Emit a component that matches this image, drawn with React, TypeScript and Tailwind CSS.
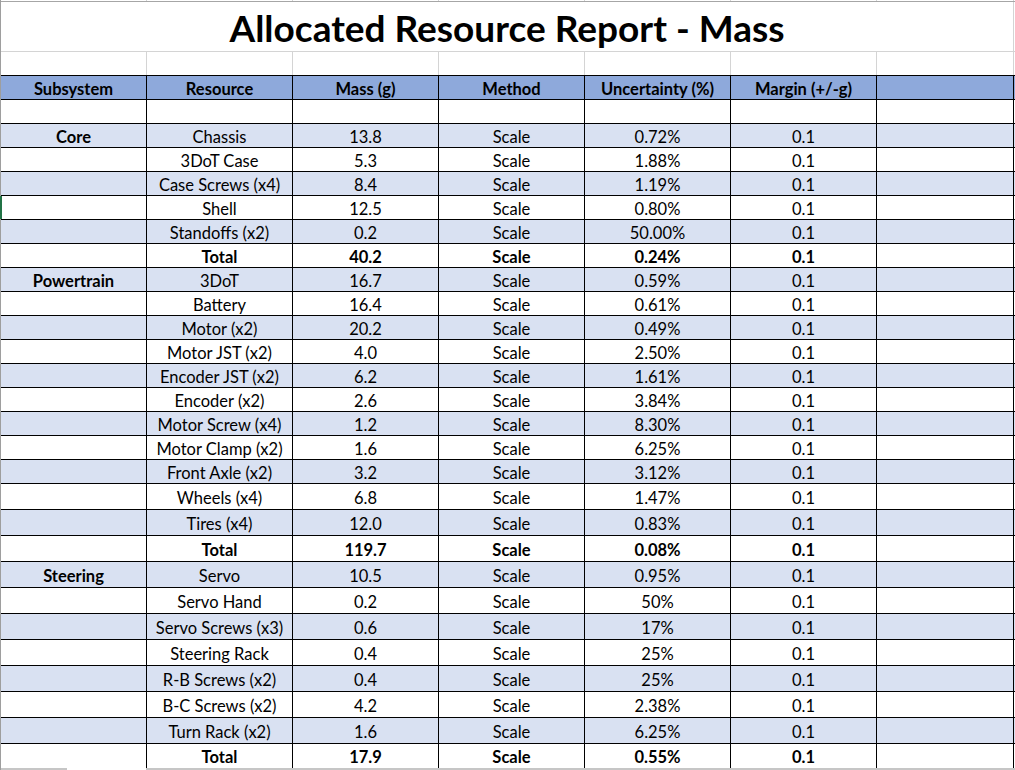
import React from "react";

type Row = {
  sub?: string;
  res: string;
  mass: string;
  unc: string;
  bold?: boolean;
  h: number;
};

const rows: Row[] = [
  { sub: "Core", res: "Chassis", mass: "13.8", unc: "0.72%", h: 24 },
  { res: "3DoT Case", mass: "5.3", unc: "1.88%", h: 24 },
  { res: "Case Screws (x4)", mass: "8.4", unc: "1.19%", h: 24 },
  { res: "Shell", mass: "12.5", unc: "0.80%", h: 24 },
  { res: "Standoffs (x2)", mass: "0.2", unc: "50.00%", h: 24 },
  { res: "Total", mass: "40.2", unc: "0.24%", bold: true, h: 24 },
  { sub: "Powertrain", res: "3DoT", mass: "16.7", unc: "0.59%", h: 24 },
  { res: "Battery", mass: "16.4", unc: "0.61%", h: 24 },
  { res: "Motor (x2)", mass: "20.2", unc: "0.49%", h: 24 },
  { res: "Motor JST (x2)", mass: "4.0", unc: "2.50%", h: 24 },
  { res: "Encoder JST (x2)", mass: "6.2", unc: "1.61%", h: 24 },
  { res: "Encoder (x2)", mass: "2.6", unc: "3.84%", h: 24 },
  { res: "Motor Screw (x4)", mass: "1.2", unc: "8.30%", h: 24 },
  { res: "Motor Clamp (x2)", mass: "1.6", unc: "6.25%", h: 24 },
  { res: "Front Axle (x2)", mass: "3.2", unc: "3.12%", h: 24 },
  { res: "Wheels (x4)", mass: "6.8", unc: "1.47%", h: 26 },
  { res: "Tires (x4)", mass: "12.0", unc: "0.83%", h: 26 },
  { res: "Total", mass: "119.7", unc: "0.08%", bold: true, h: 26 },
  { sub: "Steering", res: "Servo", mass: "10.5", unc: "0.95%", h: 26 },
  { res: "Servo Hand", mass: "0.2", unc: "50%", h: 26 },
  { res: "Servo Screws (x3)", mass: "0.6", unc: "17%", h: 26 },
  { res: "Steering Rack", mass: "0.4", unc: "25%", h: 26 },
  { res: "R-B Screws (x2)", mass: "0.4", unc: "25%", h: 26 },
  { res: "B-C Screws (x2)", mass: "4.2", unc: "2.38%", h: 26 },
  { res: "Turn Rack (x2)", mass: "1.6", unc: "6.25%", h: 26 },
  { res: "Total", mass: "17.9", unc: "0.55%", bold: true, h: 24 },
];

const colW = ["w-[146px]", "w-[146px]", "w-[146px]", "w-[146px]", "w-[146px]", "w-[146px]", "w-[137px]"];

function Cell({ i, children, bold, gray }: { i: number; children?: React.ReactNode; bold?: boolean; gray?: boolean }) {
  return (
    <div
      className={`${colW[i]} shrink-0 h-full flex items-center justify-center pt-[3px] border-r ${gray ? "border-[#d4d4d4]" : "border-black"} ${bold ? "font-bold" : ""} whitespace-nowrap`}
    >
      {children}
    </div>
  );
}

export default function App() {
  return (
    <div
      className="w-[1015px] h-[770px] overflow-hidden bg-white text-black text-[16.5px] leading-none"
      style={{ fontFamily: "Lato, 'Open Sans', sans-serif" }}
    >
      <div className="border-l border-[#9e9e9e] h-full">
        {/* top partial row */}
        <div className="flex h-[1px]">
          {colW.map((_, i) => (
            <div key={i} className={`${colW[i]} shrink-0 h-full border-r border-[#d4d4d4]`} />
          ))}
        </div>
        {/* title */}
        <div className="flex h-[51px] border-t border-b border-t-[#a6a6a6] border-b-[#d4d4d4]">
          <div className="w-[1013px] shrink-0 border-r border-[#d4d4d4] flex items-center justify-center text-[37px] font-bold pt-[1px]">
            Allocated Resource Report - Mass
          </div>
        </div>
        {/* empty row */}
        <div className="flex h-[23px]">
          {colW.map((_, i) => (
            <Cell key={i} i={i} gray />
          ))}
        </div>
        {/* header */}
        <div className="flex h-[25px] border-t border-b border-black bg-[#8ea9db] font-bold">
          <Cell i={0}>Subsystem</Cell>
          <Cell i={1}>Resource</Cell>
          <Cell i={2}>Mass (g)</Cell>
          <Cell i={3}>Method</Cell>
          <Cell i={4}>Uncertainty (%)</Cell>
          <Cell i={5}>Margin (+/-g)</Cell>
          <Cell i={6} />
        </div>
        {/* empty row */}
        <div className="flex h-[24px] border-b border-black">
          {colW.map((_, i) => (
            <Cell key={i} i={i} />
          ))}
        </div>
        {rows.map((r, idx) => {
          const last = idx === rows.length - 1;
          return (
            <div
              key={idx}
              className={`flex ${last ? "" : "border-b border-black"} ${idx % 2 === 0 ? "bg-[#d9e1f2]" : "bg-white"} ${
                r.h === 26 ? "h-[26px]" : "h-[24px]"
              } ${r.res === "Shell" ? "relative" : ""}`}
            >
              {r.res === "Shell" && <div className="absolute left-[-1px] top-0 bottom-0 w-[2px] bg-[#217346]" />}
              <Cell i={0} bold>
                {r.sub}
              </Cell>
              <Cell i={1} bold={r.bold}>
                {r.res}
              </Cell>
              <Cell i={2} bold={r.bold}>
                {r.mass}
              </Cell>
              <Cell i={3} bold={r.bold}>
                Scale
              </Cell>
              <Cell i={4} bold={r.bold}>
                {r.unc}
              </Cell>
              <Cell i={5} bold={r.bold}>
                0.1
              </Cell>
              <Cell i={6} />
            </div>
          );
        })}
        <div className="flex h-[2px] bg-[#c6c6c6]">
          <div className="w-[66px] shrink-0" />
          <div className="w-[79px] shrink-0 bg-white" />
        </div>
      </div>
    </div>
  );
}
